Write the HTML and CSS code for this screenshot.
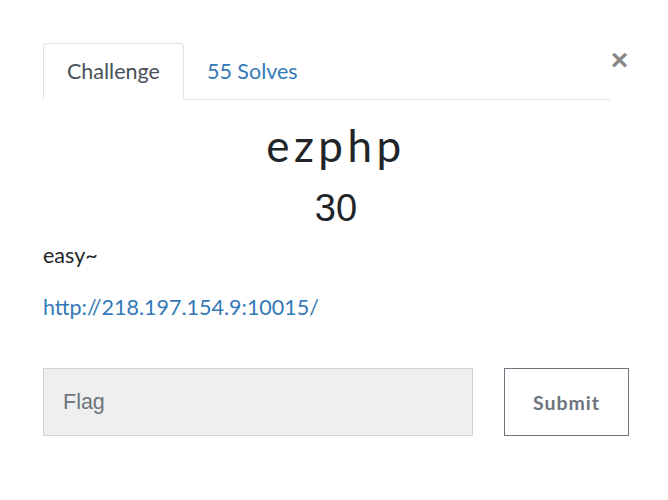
FILE: index.html
```html
<!DOCTYPE html>
<html lang="en">
<head>
  <meta charset="UTF-8">
  <title>Challenge</title>
  <link rel="stylesheet" href="styles.css">
</head>
<body>
  <div class="modal">
    <div class="tab-row">
      <ul class="nav-tabs">
        <li class="tab active">Challenge</li>
        <li class="tab"><a href="#">55 Solves</a></li>
      </ul>
      <button class="close">&times;</button>
    </div>

    <h2 class="chal-name">ezphp</h2>
    <h3 class="chal-value">30</h3>

    <div class="chal-desc">
      <p>easy~</p>
      <p><a href="#">http://218.197.154.9:10015/</a></p>
    </div>

    <form class="flag-form">
      <input type="text" class="flag-input" placeholder="Flag">
      <button type="button" class="submit-btn">Submit</button>
    </form>
  </div>
</body>
</html>
```

FILE: styles.css
```css
body {
  margin: 0;
  background: #fff;
  font-family: Lato, "Liberation Sans", sans-serif;
  color: #212529;
}

.modal {
  padding: 43px 39px 0 43px;
}

.tab-row {
  display: flex;
  align-items: flex-start;
}

.nav-tabs {
  flex: 1;
  display: flex;
  list-style: none;
  margin: 0;
  padding: 0;
  border-bottom: 1px solid #dee2e6;
  height: 56px;
}

.tab {
  font-size: 21.5px;
  padding: 0 23px;
  line-height: 56px;
  height: 57px;
  box-sizing: border-box;
}

.tab.active {
  color: #495057;
  border: 1px solid #dee2e6;
  border-bottom-color: #fff;
  border-radius: 4px 4px 0 0;
  line-height: 55px;
}

.tab a {
  color: #337ab7;
  text-decoration: none;
}

.close {
  border: none;
  background: none;
  font-family: "Liberation Sans", sans-serif;
  font-size: 30px;
  font-weight: bold;
  color: #888;
  padding: 0;
  margin: 0;
  width: 19px;
  line-height: 34px;
}

.chal-name {
  text-align: center;
  font-family: Lato, sans-serif;
  font-weight: 400;
  font-size: 44px;
  letter-spacing: 4.5px;
  margin: 20px 0 0;
  line-height: 50px;
}

.chal-value {
  text-align: center;
  font-family: "Liberation Sans", sans-serif;
  font-weight: 400;
  font-size: 38px;
  margin: 15px 0 0;
  line-height: 46px;
}

.chal-desc {
  font-size: 21.5px;
  line-height: 32px;
  margin-top: 8px;
}

.chal-desc p {
  margin: 0 0 20px;
}

.chal-desc a {
  color: #337ab7;
  text-decoration: none;
}

.flag-form {
  display: flex;
  gap: 31px;
  margin-top: 45px;
}

.flag-input {
  flex: 0 0 430px;
  height: 68px;
  box-sizing: border-box;
  background: #efefef;
  border: 1px solid #ced4da;
  padding: 0 19px;
  font-family: "Liberation Sans", sans-serif;
  font-size: 21.5px;
}

.flag-input::placeholder {
  color: #6c757d;
}

.submit-btn {
  width: 125px;
  height: 68px;
  background: #fff;
  border: 1px solid #6c757d;
  color: #6c757d;
  font-family: Lato, sans-serif;
  font-weight: bold;
  font-size: 19.5px;
  letter-spacing: 1px;
}
```
